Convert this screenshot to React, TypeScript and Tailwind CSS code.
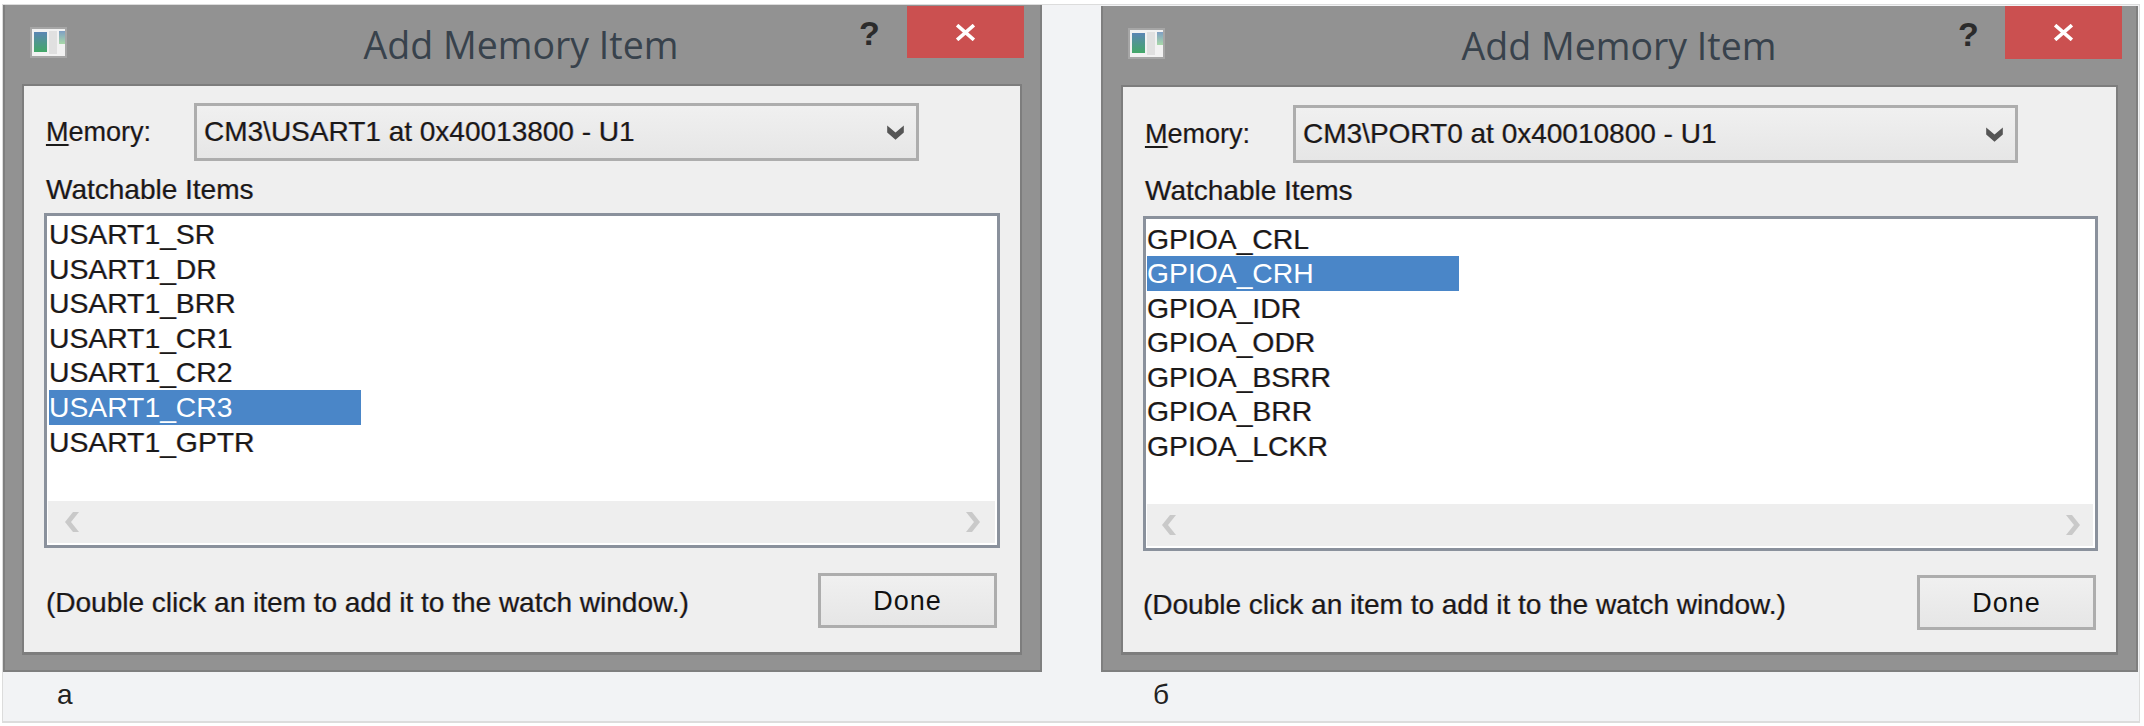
import React from "react";

const sans = { fontFamily: '"Liberation Sans", Arial, sans-serif' };
const fringe = "[text-shadow:-0.6px_0_0_rgba(225,150,40,0.4),0.6px_0_0_rgba(50,70,190,0.4)]";

function ComboChevron() {
  return (
    <svg viewBox="0 0 16 16" className="w-[19px] h-[19px]">
      <path d="M1 2 L8 8 L15 2 L15 8 L8 14 L1 8 Z" fill="#555555" />
    </svg>
  );
}

function ScrollArrow({ dir }: { dir: "left" | "right" }) {
  const d = dir === "left" ? "M9 0 L15 0 L7 10 L15 20 L9 20 L1 10 Z" : "M1 0 L7 0 L15 10 L7 20 L1 20 L9 10 Z";
  return (
    <svg viewBox="0 0 16 20" className="w-[16px] h-[20px]">
      <path d={d} fill="#c9c9c9" />
    </svg>
  );
}

function AppIcon() {
  return (
    <svg viewBox="0 0 37 31" className="w-[37px] h-[31px] [filter:blur(0.6px)]">
      <rect x="0" y="0" width="37" height="31" fill="#a6a6a6" />
      <rect x="2" y="2" width="33" height="27" fill="#f2f2f2" />
      <defs>
        <linearGradient id="g" x1="0" y1="0" x2="0" y2="1">
          <stop offset="0" stopColor="#5b86b4" />
          <stop offset="1" stopColor="#43a868" />
        </linearGradient>
        <linearGradient id="h" x1="0" y1="0" x2="0" y2="1">
          <stop offset="0" stopColor="#7f9fc4" />
          <stop offset="1" stopColor="#a8d8a8" />
        </linearGradient>
      </defs>
      <rect x="4" y="5" width="13" height="20" fill="url(#g)" />
      <rect x="19" y="4" width="8" height="23" fill="#e0e0e0" />
      <rect x="29" y="4" width="6" height="13" fill="url(#h)" />
    </svg>
  );
}

function Dialog({
  combo,
  items,
  selected,
  rootClass,
  titleClass,
  helpClass,
  closeClass,
  clientClass,
  labelClass,
  listClass,
  listPadClass,
  scrollClass,
  footerClass,
}: {
  combo: string;
  items: string[];
  selected: number;
  rootClass: string;
  titleClass: string;
  helpClass: string;
  closeClass: string;
  clientClass: string;
  labelClass: string;
  listClass: string;
  listPadClass: string;
  scrollClass: string;
  footerClass: string;
}) {
  return (
    <div className={`${rootClass} shrink-0 flex flex-col bg-[#929292] border-x-2 border-b-2 border-[#7f7f7f]`} style={sans}>
      <div className="h-[79px] flex items-start relative">
        <div className="absolute left-[25px] top-[22px]">
          <AppIcon />
        </div>
        <div
          className={`flex-1 text-center text-[37.5px] leading-[44px] text-[#38424c] pt-[18px] ${titleClass}`}
          style={{ fontFamily: '"Open Sans", sans-serif' }}
        >
          Add Memory Item
        </div>
        <div className={`absolute ${helpClass} top-[10px] text-[34px] leading-[36px] font-bold text-[#2b2b2b]`}>?</div>
        <div className={`absolute ${closeClass} w-[117px] bg-[#cb5050] flex items-center justify-center`}>
          <svg viewBox="0 0 20 16" className="w-[21px] h-[17px]">
            <path d="M2 1 L18 15 M18 1 L2 15" stroke="#ffffff" strokeWidth="3.4" fill="none" />
          </svg>
        </div>
      </div>
      <div className={`${clientClass} mr-[18px] border-2 border-b-[3px] border-[#7d7d7d] bg-[#efefef] flex flex-col pl-[20px] pr-[20px] text-[#1a1a1a]`}>
        <div className="flex items-center">
          <div className={`w-[150px] pl-[2px] text-[27px] leading-[32px] ${fringe}`}>
            <span className="underline underline-offset-[3px]">M</span>emory:
          </div>
          <div className="w-[725px] h-[58px] border-[3px] border-[#adadad] bg-gradient-to-b from-[#f0f0f0] to-[#e6e6e6] flex items-center justify-between pl-[7px] pr-[11px]">
            <span className={`text-[28px] leading-[32px] whitespace-nowrap ${fringe}`}>{combo}</span>
            <ComboChevron />
          </div>
        </div>
        <div className={`${labelClass} pl-[2px] text-[28px] leading-[32px] ${fringe}`}>Watchable Items</div>
        <div className={`${listClass} shrink-0 h-[335px] border-[3px] border-[#8a919c] bg-white flex flex-col`}>
          <div className={`flex-1 flex flex-col ${listPadClass}`}>
            {items.map((it, i) => (
              <div
                key={it}
                className={
                  i === selected
                    ? "w-[312px] h-[34.6px] text-[28.3px] leading-[34.6px] bg-[#4a86c8] text-white"
                    : `h-[34.6px] text-[28.3px] leading-[34.6px] text-[#1a1a1a] ${fringe}`
                }
              >
                {it}
              </div>
            ))}
          </div>
          <div className={`h-[42px] mb-[2px] ml-[1px] mr-[2px] bg-[#eeeeee] flex items-center justify-between ${scrollClass}`}>
            <ScrollArrow dir="left" />
            <ScrollArrow dir="right" />
          </div>
        </div>
        <div className={`flex items-center justify-between ${footerClass}`}>
          <div className={`pt-[5px] text-[28px] leading-[32px] whitespace-nowrap ${fringe}`}>(Double click an item to add it to the watch window.)</div>
          <div className="w-[179px] h-[55px] pt-[2px] border-[3px] border-[#adadad] bg-gradient-to-b from-[#f0f0f0] to-[#e6e6e6] flex items-center justify-center text-[27px] text-[#111111] tracking-[1px]">
            Done
          </div>
        </div>
      </div>
    </div>
  );
}

export default function App() {
  return (
    <div className="w-[2144px] h-[726px] bg-white pt-[4px] pl-[2px]">
      <div className="w-[2138px] h-[719px] bg-[#f2f3f5] border-x border-t border-b-2 border-[#dcdcdc] flex flex-col">
        <div className="h-[667px] flex items-start gap-[59px]">
          <Dialog
            combo="CM3\USART1 at 0x40013800 - U1"
            items={["USART1_SR", "USART1_DR", "USART1_BRR", "USART1_CR1", "USART1_CR2", "USART1_CR3", "USART1_GPTR"]}
            selected={5}
            rootClass="w-[1039px] h-[667px]"
            titleClass="pl-[1px] pr-[4px]"
            helpClass="left-[854px]"
            closeClass="right-[16px] top-[1px] h-[52px]"
            clientClass="ml-[17px] pt-[17px] h-[571px]"
            labelClass="mt-[13px] mb-[7px]"
            listClass="w-[956px]"
            listPadClass="pt-[1px] pl-[2px]"
            scrollClass="pl-[16px] pr-[14px]"
            footerClass="mt-[25px] pl-[2px] pr-[3px]"
          />
          <Dialog
            combo="CM3\PORT0 at 0x40010800 - U1"
            items={["GPIOA_CRL", "GPIOA_CRH", "GPIOA_IDR", "GPIOA_ODR", "GPIOA_BSRR", "GPIOA_BRR", "GPIOA_LCKR"]}
            selected={1}
            rootClass="w-[1037px] h-[666px] mt-[1px]"
            titleClass="pr-[1px]"
            helpClass="left-[855px]"
            closeClass="right-[14px] top-0 h-[53px]"
            clientClass="ml-[18px] pt-[18px] h-[570px]"
            labelClass="mt-[12px] mb-[9px]"
            listClass="w-[955px]"
            listPadClass="pt-[2.5px] pl-[1px]"
            scrollClass="pl-[14px] pr-[12px]"
            footerClass="mt-[24px]"
          />
        </div>
        <div className="flex-1 flex items-center pb-[4px] text-[28px] text-[#222222]" style={{ fontFamily: '"Liberation Sans", sans-serif' }}>
          <span className="ml-[54px] w-[1096px]">а</span>
          <span>б</span>
        </div>
      </div>
    </div>
  );
}
